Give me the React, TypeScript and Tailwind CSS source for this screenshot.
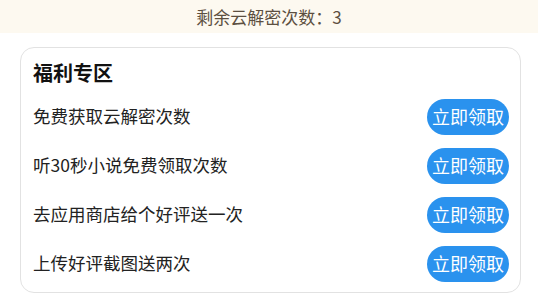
import React from "react";

const rows = [
  "免费获取云解密次数",
  "听30秒小说免费领取次数",
  "去应用商店给个好评送一次",
  "上传好评截图送两次",
];

export default function App() {
  return (
    <div
      className="w-[538px] h-[308px] bg-white"
      style={{ fontFamily: '"Noto Sans CJK SC", "Noto Sans", sans-serif' }}
    >
      <div className="h-[33px] bg-[#fdf9f0] flex items-center justify-center text-[17px] text-[#5c4f40]">
        剩余云解密次数：3
      </div>
      <div className="mt-[14px] ml-[20px] w-[501px] border border-[#e2e2e2] rounded-[14px] pt-[12px] pb-[4px] px-[12px]">
        <div className="h-[26px] mb-[6px] flex items-center text-[20px] font-bold text-[#111]">
          福利专区
        </div>
        {rows.map((r) => (
          <div key={r} className="h-[49px] flex items-center justify-between">
            <span className="text-[17.5px] text-[#222]">{r}</span>
            <button className="h-[36px] w-[82px] mr-[-1px] rounded-full bg-[#2a92ee] text-white text-[18px] flex items-center justify-center">
              立即领取
            </button>
          </div>
        ))}
      </div>
    </div>
  );
}
